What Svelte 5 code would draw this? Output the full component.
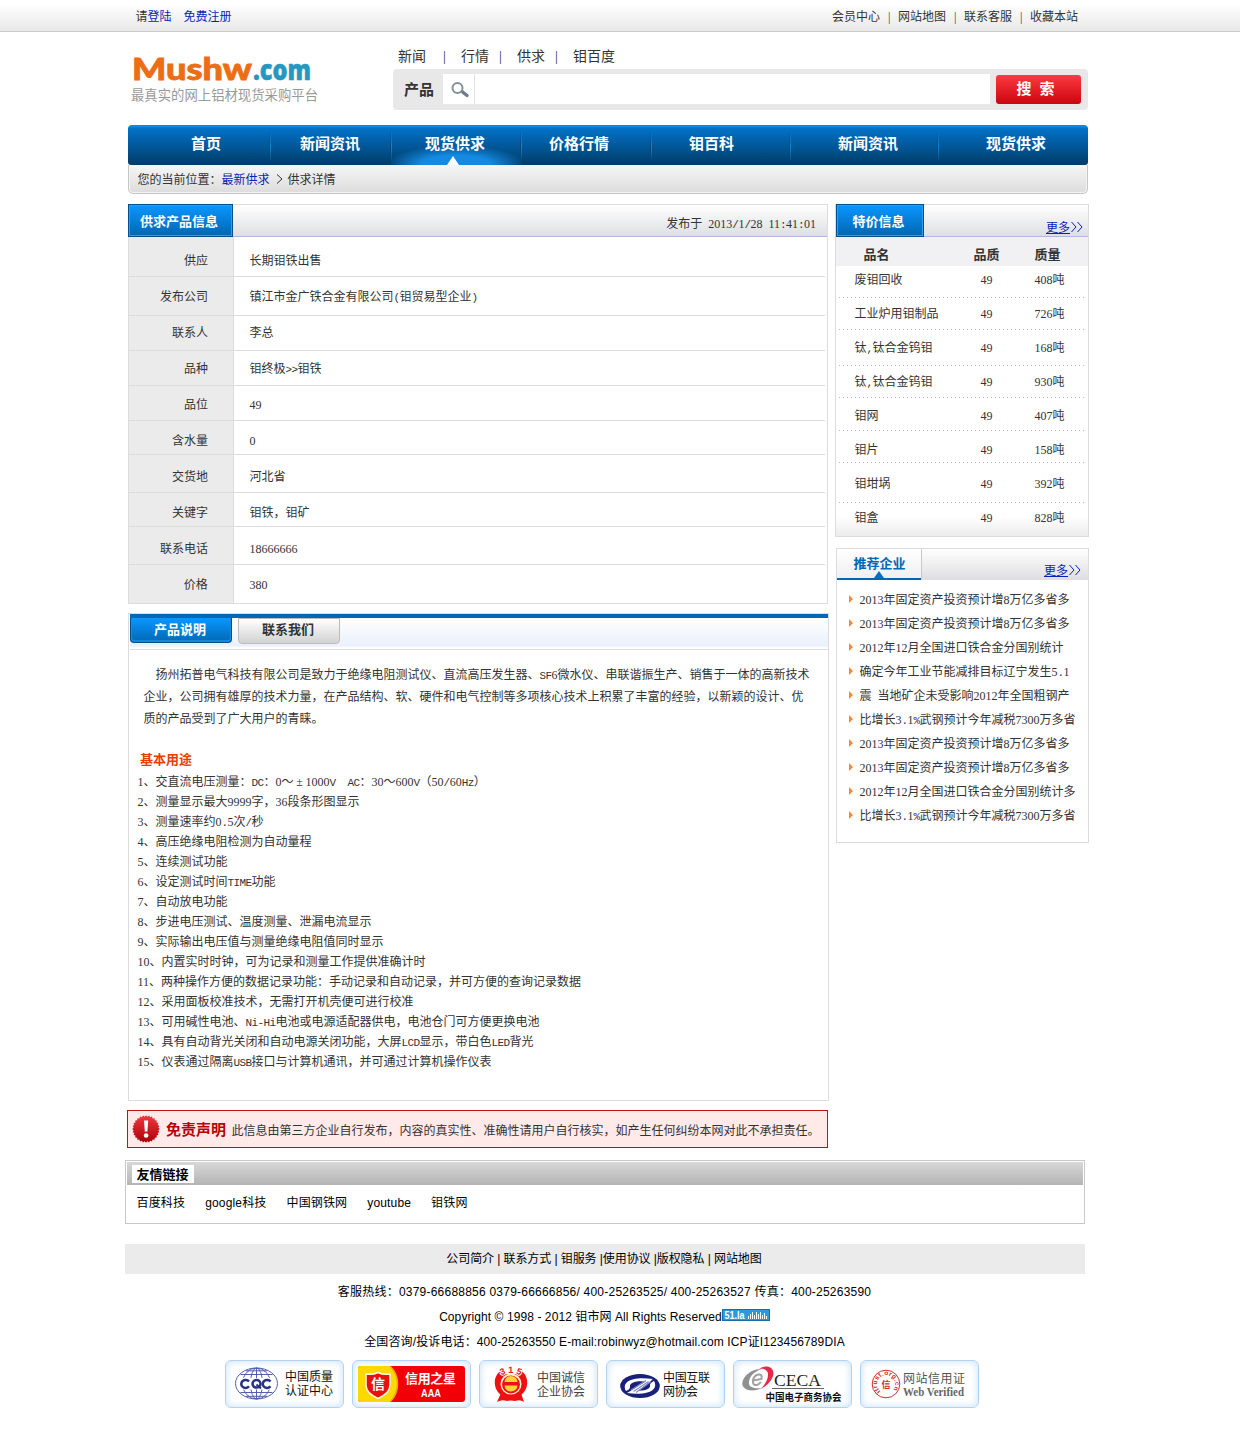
<script>
  const topLinks = ['会员中心', '|', '网站地图', '|', '联系客服', '|', '收藏本站'];
  const searchTabs = ['新闻', '|', '行情', '|', '供求', '|', '钼百度'];

  const nav = [
    { label: '首页', width: 142, pad: 63 },
    { label: '新闻资讯', width: 121, pad: 30 },
    { label: '现货供求', width: 130, pad: 34, active: true },
    { label: '价格行情', width: 130, pad: 28 },
    { label: '钼百科', width: 139, pad: 38 },
    { label: '新闻资讯', width: 148, pad: 48 },
    { label: '现货供求', width: 150, pad: 48 }
  ];

  const details = [
    { k: '供应', v: '长期钼铁出售', h: 40, p: 12 },
    { k: '发布公司', v: '镇江市金广铁合金有限公司(钼贸易型企业)', h: 39, p: 8 },
    { k: '联系人', v: '李总', h: 35, p: 5 },
    { k: '品种', v: '钼终极>>钼铁', h: 35, p: 6 },
    { k: '品位', v: '49', h: 35, p: 7 },
    { k: '含水量', v: '0', h: 34, p: 8 },
    { k: '交货地', v: '河北省', h: 38, p: 10 },
    { k: '关键字', v: '钼铁，钼矿', h: 34, p: 8 },
    { k: '联系电话', v: '18666666', h: 38, p: 10 },
    { k: '价格', v: '380', h: 39, p: 8 }
  ];

  const specials = [
    { name: '废钼回收', amount: '408吨', h: 32, p: 2 },
    { name: '工业炉用钼制品', amount: '726吨', h: 32, p: 4 },
    { name: '钛,钛合金钨钼', amount: '168吨', h: 36, p: 6 },
    { name: '钛,钛合金钨钼', amount: '930吨', h: 32, p: 4 },
    { name: '钼网', amount: '407吨', h: 33, p: 6 },
    { name: '钼片', amount: '158吨', h: 32, p: 7 },
    { name: '钼坩埚', amount: '392吨', h: 40, p: 9 },
    { name: '钼盒', amount: '828吨', h: 33, p: 3 }
  ];

  const companies = [
    '2013年固定资产投资预计增8万亿多省多',
    '2013年固定资产投资预计增8万亿多省多',
    '2012年12月全国进口铁合金分国别统计',
    '确定今年工业节能减排目标辽宁发生5.1',
    '震 当地矿企未受影响2012年全国粗钢产',
    '比增长3.1%武钢预计今年减税7300万多省',
    '2013年固定资产投资预计增8万亿多省多',
    '2013年固定资产投资预计增8万亿多省多',
    '2012年12月全国进口铁合金分国别统计多',
    '比增长3.1%武钢预计今年减税7300万多省'
  ];

  const intro = [
    '扬州拓普电气科技有限公司是致力于绝缘电阻测试仪、直流高压发生器、SF6微水仪、串联谐振生产、销售于一体的高新技术',
    '企业，公司拥有雄厚的技术力量，在产品结构、软、硬件和电气控制等多项核心技术上积累了丰富的经验，以新颖的设计、优',
    '质的产品受到了广大用户的青睐。'
  ];

  const uses = [
    '1、交直流电压测量：DC：0～±1000V  AC：30～600V（50/60Hz）',
    '2、测量显示最大9999字，36段条形图显示',
    '3、测量速率约0.5次/秒',
    '4、高压绝缘电阻检测为自动量程',
    '5、连续测试功能',
    '6、设定测试时间TIME功能',
    '7、自动放电功能',
    '8、步进电压测试、温度测量、泄漏电流显示',
    '9、实际输出电压值与测量绝缘电阻值同时显示',
    '10、内置实时时钟，可为记录和测量工作提供准确计时',
    '11、两种操作方便的数据记录功能：手动记录和自动记录，并可方便的查询记录数据',
    '12、采用面板校准技术，无需打开机壳便可进行校准',
    '13、可用碱性电池、Ni-Hi电池或电源适配器供电，电池仓门可方便更换电池',
    '14、具有自动背光关闭和自动电源关闭功能，大屏LCD显示，带白色LED背光',
    '15、仪表通过隔离USB接口与计算机通讯，并可通过计算机操作仪表'
  ];

  const links = ['百度科技', 'google科技', '中国钢铁网', 'youtube', '钼铁网'];
  const badges = ['cqc', 'star', '315', 'isc', 'ceca', 'trust'];

  // Letters and punctuation are set on a half-width grid, digits already are.
  const runs = (s) =>
    s.split(/([ -\/:-~]+|±)/).filter(Boolean).map((t) => ({
      t,
      cls: t === '±' ? 'full' : /^[ -\/:-~]+$/.test(t) ? 'half' : ''
    }));

  // Serrated edge of the warning seal.
  const seal = Array.from({ length: 56 }, (_, i) => {
    const r = i % 2 ? 12.4 : 13.8;
    const a = (i * Math.PI) / 28;
    return `${(14 + r * Math.cos(a)).toFixed(2)},${(14 + r * Math.sin(a)).toFixed(2)}`;
  }).join(' ');
</script>

{#snippet grid(s)}{#each runs(s) as r}{#if r.cls}<span class={r.cls}>{r.t}</span>{:else}{r.t}{/if}{/each}{/snippet}

<div class="page" lang="zh-CN">
  <div class="topbar">
    <div class="login">请<a href="#login">登陆</a><a class="reg" href="#reg">免费注册</a></div>
    <div class="toplinks">{#each topLinks as l}<span>{l}</span>{/each}</div>
  </div>

  <header>
    <svg class="logo" width="200" height="56" viewBox="0 0 200 56">
      <text class="mushw" x="4" y="29.500" textLength="120" lengthAdjust="spacingAndGlyphs">Mushw</text>
      <text class="com" x="125" y="29.500" textLength="58" lengthAdjust="spacingAndGlyphs">.com</text>
      <text class="slogan" x="3" y="50" textLength="187" lengthAdjust="spacingAndGlyphs">最真实的网上铝材现货采购平台</text>
    </svg>
    <div class="search">
      <div class="stabs">{#each searchTabs as t}<span>{t}</span>{/each}</div>
      <div class="sbar">
        <b>产品</b>
        <div class="lens">
          <svg width="20" height="18" viewBox="0 0 20 18">
            <path d="M12 10.500 L17 14.500" stroke="#6d7c88" stroke-width="3.400" stroke-linecap="round" />
            <circle cx="7.500" cy="7" r="5" fill="#fff" stroke="#82909b" stroke-width="2" />
          </svg>
        </div>
        <div class="field"></div>
        <button>搜<i></i>索</button>
      </div>
    </div>
  </header>

  <nav>
    {#each nav as n}
      <div class="item" class:active={n.active} style="width:{n.width}px;padding-left:{n.pad}px">{n.label}</div>
    {/each}
  </nav>
  <div class="crumb">您的当前位置：<a href="#supply">最新供求</a><svg width="18" height="12" viewBox="0 0 18 12"><path d="M7 1.500 L12 6 L7 10.500" fill="none" stroke="#333" /></svg>供求详情</div>

  <div class="cols">
    <main>
      <section class="info">
        <div class="head">
          <h2 class="tab">供求产品信息</h2>
          <span class="date">{@render grid('发布于 2013/1/28 11:41:01')}</span>
        </div>
        {#each details as d}
          <div class="row" style="height:{d.h}px">
            <div class="key" style="padding-top:{d.p}px">{d.k}</div>
            <div class="val" style="padding-top:{d.p}px">{@render grid(d.v)}</div>
          </div>
        {/each}
      </section>

      <section class="desc">
        <div class="dhead">
          <h3 class="on">产品说明</h3>
          <h3>联系我们</h3>
        </div>
        <div class="intro">
          {#each intro as p}<p>{@render grid(p)}</p>{/each}
        </div>
        <h4>基本用途</h4>
        <div class="uses">
          {#each uses as u}<p>{@render grid(u)}</p>{/each}
        </div>
      </section>

      <div class="notice">
        <svg width="28" height="28" viewBox="0 0 28 28">
          <defs>
            <linearGradient id="red" x1="0" y1="0" x2="0" y2="1">
              <stop offset="0" stop-color="#f2383e" /><stop offset="1" stop-color="#a90008" />
            </linearGradient>
          </defs>
          <polygon points={seal} fill="url(#red)" />
          <path d="M12 5.500 h4.200 l-.8 11 h-2.600z" fill="#fff" />
          <circle cx="14.100" cy="20.500" r="2.300" fill="#fff" />
        </svg>
        <b>免责声明</b>
        <span>此信息由第三方企业自行发布，内容的真实性、准确性请用户自行核实，如产生任何纠纷本网对此不承担责任。</span>
      </div>
    </main>

    <aside>
      <section class="special">
        <div class="head">
          <h2 class="tab">特价信息</h2>
          <a class="more" href="#more"><u>更多</u><svg width="12" height="12" viewBox="0 0 12 12"><path d="M0.500 1 L5 6 L0.500 11 M6.500 1 L11 6 L6.500 11" fill="none" stroke="#0a1fb8" /></svg></a>
        </div>
        <div class="thead"><b>品名</b><b>品质</b><b>质量</b></div>
        {#each specials as s}
          <div class="srow" style="height:{s.h}px;padding-top:{s.p}px">
            <span>{@render grid(s.name)}</span><span>49</span><span>{s.amount}</span>
          </div>
        {/each}
      </section>

      <section class="recommend">
        <div class="rhead">
          <h2>推荐企业</h2>
          <a class="more" href="#more"><u>更多</u><svg width="12" height="12" viewBox="0 0 12 12"><path d="M0.500 1 L5 6 L0.500 11 M6.500 1 L11 6 L6.500 11" fill="none" stroke="#0a1fb8" /></svg></a>
        </div>
        <ul>
          {#each companies as c}<li><span>{@render grid(c)}</span></li>{/each}
        </ul>
      </section>
    </aside>
  </div>

  <section class="friends">
    <div class="fhead"><b>友情链接</b></div>
    <div class="flinks">{#each links as l}<span>{l}</span>{/each}</div>
  </section>

  <footer>
    <div class="band">公司简介 | 联系方式 | 钼服务 |使用协议 |版权隐私 | 网站地图</div>
    <p class="phones">客服热线：0379-66688856 0379-66666856/ 400-25263525/ 400-25263527 传真：400-25263590</p>
    <p class="copy">Copyright © 1998 - 2012 钼市网 All Rights Reserved<svg class="la" width="48" height="12" viewBox="0 0 48 12">
        <rect x=".5" y=".5" width="47" height="11" fill="#2b9ad8" stroke="#1670a8" />
        <text x="2.500" y="9.500" textLength="20" lengthAdjust="spacingAndGlyphs">51.la</text>
        <path d="M26.500 10V7M28.500 10V5M30.500 10V3M32.500 10V6M34.500 10V3M36.500 10V5M38.500 10V3M40.500 10V6M42.500 10V4M44.500 10V7" stroke="#fff" stroke-width="1" />
      </svg></p>
    <p class="mail">全国咨询/投诉电话：400-25263550 E-mail:robinwyz@hotmail.com ICP证I123456789DIA</p>
    <div class="badges">
      {#each badges as b}
        <div class="badge">
          <svg width="117" height="46" viewBox="1 1 117 46">
            {#if b === 'cqc'}
              <g fill="none" stroke="#5560ad" stroke-width="1">
                <ellipse cx="31.500" cy="23.500" rx="21" ry="15.500" />
                <ellipse cx="31.500" cy="23.500" rx="14" ry="15.500" />
                <ellipse cx="31.500" cy="23.500" rx="6" ry="15.500" />
                <path d="M31.500 8v31M15.500 14.500h32M15.500 32.500h32M21 10.800h21M21 36.300h21" />
              </g>
              <rect x="14.500" y="18" width="34" height="11.500" fill="#fff" />
              <g fill="none" stroke="#29327f" stroke-width="2.500">
                <path d="M24 21.500 A4.300 4 0 1 0 24 26.300" />
                <ellipse cx="31.500" cy="23.800" rx="4" ry="3.800" />
                <path d="M31.500 24.500l4.500 4" stroke-width="2" />
                <path d="M45.500 21.500 A4.300 4 0 1 0 45.500 26.300" />
              </g>
              <text class="t12 blk" x="60" y="21" textLength="48">中国质量</text>
              <text class="t12 blk" x="60" y="35" textLength="48">认证中心</text>
            {:else if b === 'star'}
              <rect x="6" y="6" width="107" height="36" rx="3" fill="#f20008" />
              <path d="M9 6h29c10 10 10 26 0 36H9a3 3 0 0 1-3-3V9a3 3 0 0 1 3-3z" fill="#ffd800" />
              <path d="M38 6c10 10 10 26 0 36" fill="none" stroke="#f0a800" stroke-width="1.500" />
              <path d="M14 14q7 1 12-1.500q5 2.500 12 1.500v11q0 8-12 13.500q-12-5.500-12-13.500z" fill="#e81010" stroke="#fffbe0" stroke-width="1.500" />
              <text class="b14 wht" x="19" y="29">信</text>
              <text class="b13 wht" x="53" y="23" textLength="51">信用之星</text>
              <text class="aaa" x="69" y="37" textLength="20" lengthAdjust="spacingAndGlyphs">AAA</text>
            {:else if b === '315'}
              <path d="M22 33L18 42q5-3 10-1q4-1 8 0q5-2 9 1L42 33z" fill="#ee1111" />
              <path d="M23 10C12 16 14 33 26 37h12C50 33 52 16 41 10l-3 4H26z" fill="#ee1111" />
              <circle cx="32" cy="24" r="10.500" fill="#fff6d8" />
              <circle cx="32" cy="24.500" r="9" fill="#ee1111" />
              <path d="M25.500 22a6.500 6 0 0 1 13 0z" fill="#ffd23c" />
              <path d="M25.500 25.500h13a6.500 6 0 0 1-13 0z" fill="#ffd23c" />
              <path id="arc315" d="M20.500 16.500Q32 9.500 43.500 16.500" fill="none" />
              <text class="n315"><textPath href="#arc315" startOffset="2" textLength="20">315</textPath></text>
              <text class="t12 gry" x="58" y="22" textLength="48">中国诚信</text>
              <text class="t12 gry" x="58" y="36" textLength="48">企业协会</text>
            {:else if b === 'isc'}
              <ellipse cx="34" cy="26" rx="19.800" ry="12" fill="#18207c" />
              <path d="M20 31C15 22 26 16 47 19L42 22C30 20 23 23 24 27C24 29 22 30 20 31z" fill="#fff" />
              <path d="M48 21C53 30 42 36 21 33L26 30C38 32 45 29 44 25C44 23 46 22 48 21z" fill="#fff" />
              <path d="M26 30L41 20.500L46 20L30 32.500z" fill="#fff" />
              <path d="M25 30l15-9.500M27.500 31.500l15-10M30 32.500l15-11" stroke="#8089c6" stroke-width="1.100" />
              <text class="t12 blk" x="57" y="22" textLength="47">中国互联</text>
              <text class="t12 blk" x="57" y="36" textLength="35">网协会</text>
            {:else if b === 'ceca'}
              <path d="M29 9C16 8 6 21 10.500 27C14 32 24 31 29 28C20 29 15 27 16 21.500C17 15 23 10.500 29 9z" fill="#909090" />
              <path d="M26 9C34 3.500 42.500 8 40 16C38 22 33 26 28 29C33 23 36.500 17 34.500 12C33 9 30 8 26 9z" fill="#e32a48" />
              <path d="M20 20.500l8.500-1.500q1-5-3-4.500q-5 1-5.500 6t3.500 4.500q2.500-.5 4.500-3" fill="none" stroke="#a0a0a0" stroke-width="2" />
              <text class="ceca" x="41" y="25.500" textLength="47" lengthAdjust="spacingAndGlyphs">CECA</text>
              <path d="M39 28.500h52" stroke="#666" />
              <text class="b10 blk" x="32.500" y="40.500" textLength="76" lengthAdjust="spacingAndGlyphs">中国电子商务协会</text>
            {:else}
              <circle cx="26" cy="24" r="13.800" fill="none" stroke="#d22b2b" />
              <path id="ring" d="M20.500 31.300 A9 9 0 1 1 31.500 31.300" fill="none" />
              <text class="ringt"><textPath href="#ring" textLength="42">itrust.org.cn</textPath></text>
              <text class="seal" x="21.500" y="27.500">信</text>
              <text class="t12 gry2" x="43" y="23" textLength="62">网站信用证</text>
              <text class="web" x="43" y="36" textLength="61" lengthAdjust="spacingAndGlyphs">Web Verified</text>
            {/if}
          </svg>
        </div>
      {/each}
    </div>
  </footer>
</div>

<style>
  :global(body) { margin: 0; background: #fff; }
  .page {
    height: 1450px;
    overflow: hidden;
    font: 12px/24px 'Liberation Serif', 'Noto Sans CJK SC', serif;
    color: #333;
    white-space: nowrap;
  }
  .page * { box-sizing: border-box; }
  h2, h3, h4, p, ul { margin: 0; padding: 0; list-style: none; }
  svg { display: block; overflow: visible; }
  a { color: #0a1fb8; text-decoration: none; }
  .half { font-family: 'Liberation Mono', monospace; font-size: 11px; letter-spacing: -.6px; line-height: 1; white-space: pre; }
  .full { display: inline-block; width: 12px; text-align: center; line-height: 1; }

  .topbar {
    height: 32px;
    padding: 5px 162px 0 135.5px;
    display: flex;
    justify-content: space-between;
    border-bottom: 1px solid #ccc;
    background: linear-gradient(#fff 10%, #e9e9e9);
  }
  .reg { margin-left: 12px; }
  .toplinks { display: grid; grid-template-columns: 56px 10px 56px 10px 56px 10px 48px; }

  header { display: flex; height: 93px; padding-left: 128px; }
  .logo { margin-top: 18px; width: 200px; }
  .mushw { font: 900 31px Lato, sans-serif; fill: #ed6d14; stroke: #ed6d14; stroke-width: .8; }
  .com { font: 800 29px 'Open Sans', sans-serif; fill: #2598c2; stroke: #2598c2; stroke-width: .5; }
  .slogan { font: 13.3px 'Noto Sans CJK SC', sans-serif; fill: #999; }
  .search { margin-left: 65px; width: 695px; padding-top: 13px; }
  .stabs { display: grid; grid-template-columns: 45px 18px 38px 18px 38px 18px 50px; padding-left: 5px; font-size: 14px; height: 24px; }
  .sbar { height: 41px; background: #e8e8e9; border-radius: 4px; display: flex; padding: 5px 7px 0 11px; }
  .sbar b { width: 39px; font-size: 15px; line-height: 32px; }
  .lens { width: 32px; height: 30px; background: #fff; border-right: 1px solid #e2e2e2; padding: 7px 0 0 7px; }
  .field { width: 515px; height: 30px; background: #fff; }
  button {
    margin: 1px 0 0 6px; width: 85px; height: 29px; padding: 0 6px 0 0; border: 0; border-radius: 3px;
    background: linear-gradient(#fb3a3e, #cd0410); color: #fff;
    font: bold 15px/29px 'Liberation Serif', 'Noto Sans CJK SC', serif; white-space: pre;
  }
  button i { display: inline-block; width: 8px; }

  nav {
    margin-left: 128px; width: 960px; height: 40px; display: flex; border-radius: 4px 4px 3px 3px; overflow: hidden;
    background: linear-gradient(#0b7fd6 0, #1191f0 1px, #0b85dd 2px, #0272c8 3px, #003c68);
  }
  .item {
    position: relative; height: 40px; color: #fff; font-weight: bold; font-size: 15px; line-height: 39px;
  }
  .item:not(:last-child)::after {
    content: ''; position: absolute; z-index: 1; right: -1px; top: 5px; width: 2px; height: 32px;
    background: linear-gradient(90deg, #00375f88 50%, #1684d5 50%);
    mask: linear-gradient(transparent, #000 50%, transparent);
  }
  .active { background: radial-gradient(ellipse 70px 20px at 50% 100%, #148ae2 50%, #148ae200); }
  .active::before {
    content: ''; position: absolute; left: 56px; bottom: 0; border: 6px solid transparent;
    border-top: 0; border-bottom: 9px solid #fff;
  }
  .crumb {
    margin-left: 128px; width: 960px; height: 29px; padding: 3px 0 0 8.5px; display: flex;
    border: 1px solid #c6c6c6; border-top: 0; border-radius: 0 0 5px 5px;
    background: linear-gradient(#f6f6f6, #dcdcdc); box-shadow: inset 0 0 0 1px #f3f3f3;
  }
  .crumb svg { margin-top: 5px; }

  .cols { margin: 10px 0 0 127px; width: 962px; display: flex; justify-content: space-between; }
  main { width: 702px; }
  aside { width: 254px; }

  .head {
    height: 33px; display: flex; justify-content: space-between;
    border-top: 1px solid #dcdcdc; border-bottom: 1px solid #b9b2e3;
    background: linear-gradient(#fff, #dedfe2);
  }
  .tab {
    margin-top: -1px; height: 33px; border: 1px solid #00508d;
    background: linear-gradient(#0a97ff, #0066b1); box-shadow: inset 0 0 0 1px #2b9cf0;
    color: #fff; font-size: 13px; line-height: 33px;
  }
  .info { margin-left: 1px; width: 700px; border-right: 1px solid #dcdcdc; }
  .info .tab { width: 105px; padding-left: 11px; }
  .date { padding: 7px 11px 0 0; }
  .row { display: flex; }
  .key {
    width: 106px; padding-right: 25px; text-align: right; background: #ebebeb;
    border: solid #dcdcdf; border-width: 0 1px 1px;
  }
  .val { width: 591px; padding-left: 15.5px; border-bottom: 1px solid #dcdcdf; }
  .row:last-child .val { width: 594px; }

  .desc {
    margin: 9px 0 0 1px; width: 701px; height: 488px; border: 1px solid #dcdcdf;
  }
  .dhead {
    height: 36px; margin-left: 1px; display: flex; gap: 6px; border-top: 4px solid #0068b5;
    border-bottom: 1px solid #dcdcdf; background: linear-gradient(#fff, #eaf0fc 90%, #fff 96%);
  }
  h3 {
    width: 102px; height: 26px; padding-left: 23px; font-size: 13px; line-height: 22px;
    border: 1px solid #bcbcbc; border-radius: 0 0 4px 4px; background: linear-gradient(#fff, #d2d2d2);
  }
  h3.on {
    height: 25px; border: 1px solid #00508d; border-top: 0; color: #fff; line-height: 23px;
    background: linear-gradient(#0a97ff, #0068b5); box-shadow: inset 0 -1px 0 1px #1689df;
  }
  .intro { padding: 14px 0 0 14.5px; line-height: 22px; }
  .intro p:first-child { padding-left: 12px; }
  h4 { padding: 19px 0 0 11px; font-size: 13px; line-height: 22px; color: #ea3e00; }
  .uses { padding: 1px 0 0 8.5px; line-height: 20px; }
  .uses p { height: 20px; }
  .intro p { height: 22px; }

  .notice {
    margin-top: 9px; width: 701px; height: 38px; display: flex; align-items: center;
    border: 1px solid #bd1116; background: #ffe9e9; padding-left: 4px;
  }
  .notice b { margin-left: 6px; width: 65.5px; padding-top: 2px; font-size: 15px; color: #ba0006; }
  .notice span { padding-top: 3px; }

  .special {
    height: 333px; width: 254px; border: solid #dcdcdf; border-width: 0 1px 1px;
    background: linear-gradient(#fff 94%, #ececec);
  }
  .special .tab { width: 88px; padding-left: 15.5px; }
  .more { display: flex; padding: 11px 5px 0 0; }
  .more u { text-underline-offset: 1px; }
  .more svg { margin: 5px 0 0 1px; }
  .thead, .srow { display: grid; }
  .thead { height: 29px; background: #f1f1f4; font-size: 13px; line-height: 35px; grid-template-columns: 110px 61px 50px; padding-left: 27.5px; }
  .srow { margin: 0 3px; padding-left: 15.5px; grid-template-columns: 126px 54px 50px; }
  .srow:not(:last-child) {
    background: repeating-linear-gradient(90deg, #bbb 0 1px, transparent 1px 4px) bottom / 100% 1px no-repeat;
  }

  .recommend { margin: 11px 0 0 1px; width: 253px; height: 295px; border: 1px solid #dcdcdf; }
  .rhead {
    height: 31px; display: flex; justify-content: space-between; background: linear-gradient(#fff, #dedee0);
  }
  .rhead h2 {
    position: relative; width: 84px; padding-left: 16.5px; font-size: 13px; line-height: 29px; color: #0068b5;
    border-bottom: 2px solid #0068b5; background: linear-gradient(#fff, #f0f0f2);
    box-shadow: 1px 0 #c8c8ca;
  }
  .rhead h2::after {
    content: ''; position: absolute; left: 37px; bottom: 0; border: 5px solid transparent;
    border-top: 0; border-bottom: 7px solid #0072c0;
  }
  .rhead .more { padding: 10px 7px 0 0; }
  ul { padding: 8px 0 0 12px; }
  li { height: 24px; display: flex; }
  li::before {
    content: ''; margin: 7px 6.5px 0 0; height: 0; border: 4px solid transparent;
    border-right: 0; border-left-color: #f88834;
  }

  .friends, footer { margin-left: 125px; width: 960px; color: #000; font-family: 'Liberation Sans', 'Noto Sans CJK SC', sans-serif; }
  .friends { margin-top: 12px; height: 64px; border: 1px solid #c8c8c8; padding: 1px; }
  .fhead { height: 23px; padding: 3px 0 0 5px; background: linear-gradient(#d8d8d8, #b4b4b4); }
  .fhead b { display: block; width: 62px; height: 18px; padding-left: 4.5px; background: #fff; font-size: 13px; line-height: 19px; }
  .flinks { display: flex; gap: 20px; padding: 6px 0 0 9.5px; letter-spacing: .16px; }
  .band { height: 30px; margin-top: 20px; padding-right: 2px; background: #ebebeb; text-align: center; line-height: 31px; letter-spacing: -.08px; }
  footer p { height: 25px; line-height: 25px; padding-right: 1px; text-align: center; }
  footer .band + p { margin-top: 6px; }
  .phones { letter-spacing: .225px; }
  .copy { letter-spacing: .08px; }
  .mail { letter-spacing: .12px; }
  .la { display: inline-block; vertical-align: 0; }
  .la text { font: bold 10px 'Liberation Sans', sans-serif; fill: #fff; letter-spacing: 0; }
  .badges { display: flex; gap: 8px; margin: 5px 0 0 100px; }
  .badge { width: 119px; height: 48px; border: 1px solid #b3d3f5; border-radius: 6px; box-shadow: inset 0 0 7px 1px #cfe4f6; }
  .badge text { font-family: 'Noto Sans CJK SC', sans-serif; }
  .t12 { font-size: 12px; }
  .blk { fill: #111; }
  .gry { fill: #444; }
  .gry2 { fill: #555; }
  .wht { fill: #fff; }
  .b14 { font-size: 14px; font-weight: bold; }
  .b13 { font-size: 13px; font-weight: bold; }
  .b10 { font-size: 10px; font-weight: bold; }
  .badge .aaa { font: bold 10px 'Liberation Sans', sans-serif; fill: #fff; }
  .badge .n315 { font: bold 9px 'Liberation Sans', sans-serif; fill: #ee1111; stroke: #fff; stroke-width: 2px; paint-order: stroke; }
  .badge .ceca { font: 16px 'Liberation Serif', serif; fill: #222; }
  .badge .ringt { font: bold 6.5px 'Liberation Sans', sans-serif; fill: #d22b2b; }
  .seal { font-size: 9px; font-weight: bold; fill: #d22b2b; }
  .badge .web { font: bold 12px 'Liberation Serif', serif; fill: #666; }
</style>
